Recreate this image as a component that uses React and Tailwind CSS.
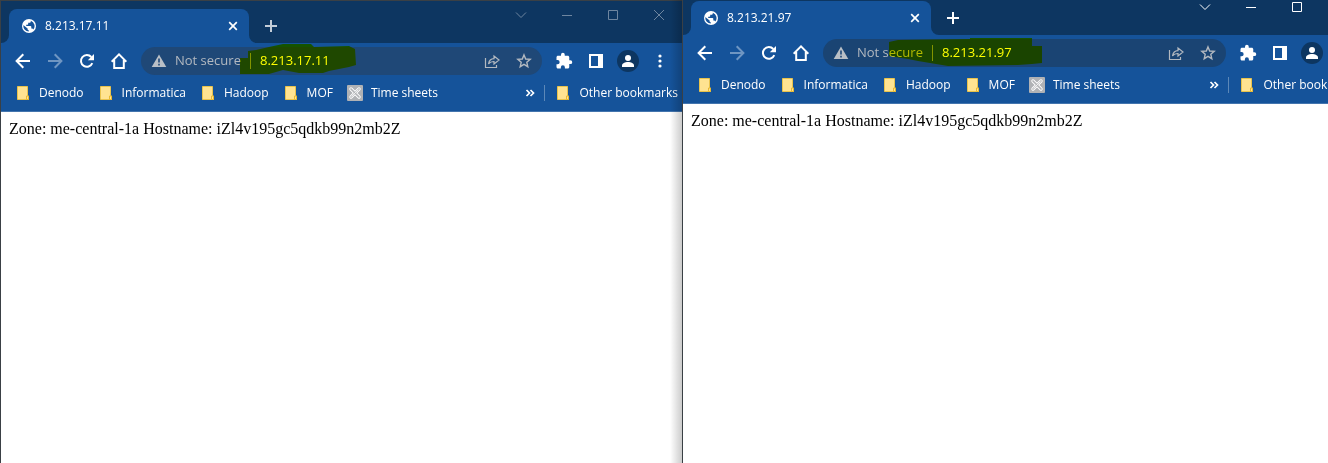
import React from "react";

const F = "font-['Open_Sans','Noto_Sans',sans-serif]";

function Globe() {
  return (
    <svg className="size-4 shrink-0" viewBox="0 0 16 16" aria-hidden="true">
      <circle cx="8" cy="8" r="7" fill="#fff" />
      <path
        d="M2.6 7.2 6.6 10.4v1l1.2 1v1.2A5.7 5.7 0 0 1 2.3 7.6zM9.8 2.7v.7c0 .8-.7 1.4-1.4 1.4H7.2v1.1c0 .5-.3.8-.7.8H5.2V8h4.3c.4 0 .8.4.8.8v1.8h.7c.6 0 1.1.4 1.3 1A5.7 5.7 0 0 0 9.8 2.7z"
        fill="#15539a"
      />
    </svg>
  );
}

function Folder() {
  return (
    <svg className="size-4 shrink-0" viewBox="0 0 16 16" aria-hidden="true">
      <path d="M2.5 1.5h10v9.5h1v3.5h-11z" fill="#ffe391" stroke="#e9c34c" />
      <path d="M11.5 14.5v-3.5h2v3.5z" fill="#ffe391" stroke="#e9b931" />
    </svg>
  );
}

function TimeSheet() {
  return (
    <svg className="size-4 shrink-0" viewBox="0 0 16 16" aria-hidden="true">
      <rect width="16" height="16" rx="1" fill="#b0b2b5" />
      <path d="M4 4l8 8M12 4l-8 8" stroke="#fff" strokeWidth="3.4" strokeLinecap="round" />
      <path d="M4 4l8 8M12 4l-8 8" stroke="#b0b2b5" strokeWidth="1.7" strokeLinecap="round" />
      <path d="M4.5 11.5l7-7" stroke="#fff" strokeWidth="0.8" />
    </svg>
  );
}

function IconButton({ label, children }) {
  return (
    <button type="button" aria-label={label} className="flex size-8 shrink-0 items-center justify-center text-white">
      {children}
    </button>
  );
}

function Stroke({ d, w = 2, className = "size-4" }) {
  return (
    <svg className={className} viewBox="0 0 16 16" fill="none" stroke="currentColor" strokeWidth={w} aria-hidden="true">
      <path d={d} />
    </svg>
  );
}

const links = [
  { name: "Denodo" },
  { name: "Informatica" },
  { name: "Hadoop" },
  { name: "MOF" },
  { name: "Time sheets", icon: <TimeSheet /> },
];

function Bookmark({ name, icon }) {
  return (
    <a href="#" className="flex shrink-0 items-center gap-2 whitespace-nowrap">
      {icon || <Folder />}
      <span>{name}</span>
    </a>
  );
}

function BrowserWindow({ address, active, marker }) {
  return (
    <section
      className={`${F} flex w-full ${active ? "min-w-[684px]" : "min-w-[682px]"} flex-1 flex-col border-t border-l border-[#3a4045] bg-white text-white`}
      aria-label={address}
    >
      <header className="flex h-[42px] shrink-0 bg-[#0d3661]">
        <div className="flex items-end">
          <div className="h-[34px] w-2 bg-[#15539a]">
            <div className="h-full rounded-br-lg bg-[#0d3661]" />
          </div>
          <div className="flex h-[34px] w-60 items-center gap-2 rounded-t-lg bg-[#15539a] pr-2 pl-3 text-xs">
            <Globe />
            <span className="flex-1">{address}</span>
            <button type="button" aria-label="Close tab" className="flex size-4 items-center justify-center">
              <Stroke d="M4.2 4.2l7.6 7.6M11.8 4.2l-7.6 7.6" w={1.7} />
            </button>
          </div>
          <div className="h-[34px] w-2 bg-[#15539a]">
            <div className="h-full rounded-bl-lg bg-[#0d3661]" />
          </div>
          <button
            type="button"
            aria-label="New tab"
            className={`ml-1 flex h-[34px] w-5 items-center justify-center ${active ? "text-white" : "text-[#c3cdd8]"}`}
          >
            <Stroke d="M8 2v12M2 8h12" w={2} />
          </button>
        </div>
        <div className={`ml-auto flex h-7 ${active ? "text-white" : "text-[#6e86a0]"}`}>
          <button type="button" aria-label="Search tabs" className="flex w-[46px] items-center justify-center">
            <Stroke d="M3 5.5l5 5 5-5" w={1} />
          </button>
          <button type="button" aria-label="Minimize" className="flex w-[46px] items-center justify-center">
            <Stroke d="M3 8.5h10" w={1} />
          </button>
          <button type="button" aria-label="Maximize" className="flex w-[46px] items-center justify-center">
            <Stroke d="M3.5 3.5h9v9h-9z" w={1} />
          </button>
          <button type="button" aria-label="Close" className="flex w-[46px] items-center justify-center">
            <Stroke d="M3 3l10 10M13 3L3 13" w={1} />
          </button>
        </div>
      </header>

      <div className="shrink-0 border-b border-[#4375ae] bg-[#15539a]">
        <div className="flex h-9 items-center px-[6px]">
          <IconButton label="Back">
            <Stroke d="M15 8H2M8.3 1.3L1.6 8l6.7 6.7" />
          </IconButton>
          <IconButton label="Forward">
            <span className="text-[#6f96c2]">
              <Stroke d="M1 8h13M7.7 1.3L14.4 8l-6.7 6.7" />
            </span>
          </IconButton>
          <IconButton label="Reload">
            <svg className="size-4" viewBox="0 0 16 16" aria-hidden="true">
              <path d="M13.3 10.2A5.9 5.9 0 1 1 12.3 4" fill="none" stroke="currentColor" strokeWidth="2" />
              <path d="M15 1v6.2H8.8z" fill="currentColor" />
            </svg>
          </IconButton>
          <IconButton label="Home">
            <Stroke d="M.6 8.7L8 1.4l7.4 7.3M3.2 7v8h9.6V7" />
          </IconButton>
          <div
            className={`relative ml-[6px] flex h-7 flex-1 items-center rounded-full px-[10px] text-[#b3b9c0] ${active ? "bg-[#1a4473]" : "bg-[#1f4877]"}`}
          >
            <svg className="size-4 shrink-0" viewBox="0 0 16 16" aria-hidden="true">
              <path d="M8 1.5L15.3 14H.7z" fill="#b9bfc6" />
              <path d="M8 5.5v4M8 10.8v1.6" stroke="#1f4877" strokeWidth="1.6" />
            </svg>
            <span className="ml-2 w-[75px] shrink-0 text-[13px] whitespace-nowrap">Not secure</span>
            <span className="h-4 w-px bg-[#8394a8]" />
            <input
              aria-label="Address"
              defaultValue={address}
              className="ml-[9px] min-w-0 flex-1 bg-transparent text-[13px] text-white outline-none"
            />
            <button type="button" aria-label="Share" className="mr-4 size-4">
              <Stroke
                d="M1.500 5v9.500h11V12M4.500 11c.6-3.600 2.600-5.200 5.500-5.300V3l5 4-5 4V8.500c-2.500-.1-4 .6-5.500 2.500z"
                w={1.2}
              />
            </button>
            <button type="button" aria-label="Bookmark this page" className="size-4">
              <Stroke
                d="M8 1.9l1.700 4.100 4.500.4-3.400 2.900 1 4.400L8 11.400l-3.800 2.300 1-4.400L1.800 6.400l4.500-.4z"
                w={1.4}
              />
            </button>
            {marker}
          </div>
          <div className="ml-[6px] flex">
            <IconButton label="Extensions">
              <svg className="size-[18px]" viewBox="0 0 24 24" fill="currentColor" aria-hidden="true">
                <path d="M20.5 11H19V7c0-1.100-.9-2-2-2h-4V3.500a2.500 2.500 0 0 0-5 0V5H4c-1.100 0-2 .9-2 2v3.800h1.500a2.700 2.700 0 0 1 0 5.400H2V20c0 1.100.9 2 2 2h3.800v-1.500a2.700 2.700 0 0 1 5.400 0V22H17c1.100 0 2-.9 2-2v-4h1.500a2.500 2.500 0 0 0 0-5z" />
              </svg>
            </IconButton>
            <IconButton label="Side panel">
              <svg className="size-4" viewBox="0 0 16 16" aria-hidden="true">
                <path fillRule="evenodd" d="M1 1h14v14H1zM3 3v10h7V3z" fill="currentColor" />
              </svg>
            </IconButton>
            <IconButton label="Profile">
              <svg className="size-[22px]" viewBox="0 0 22 22" aria-hidden="true">
                <circle cx="11" cy="11" r="11" fill="#0d3661" />
                <circle cx="11" cy="8" r="3" fill="currentColor" />
                <path d="M5 17v-1.500C5 13.300 8 12 11 12s6 1.300 6 3.500V17z" fill="currentColor" />
              </svg>
            </IconButton>
            <IconButton label="Menu">
              <svg className="size-4" viewBox="0 0 16 16" fill="currentColor" aria-hidden="true">
                <circle cx="8" cy="3" r="1.6" />
                <circle cx="8" cy="8" r="1.6" />
                <circle cx="8" cy="13" r="1.6" />
              </svg>
            </IconButton>
          </div>
        </div>
        <nav className="flex h-8 items-center pr-1 pb-1 pl-[14px] text-xs" aria-label="Bookmarks">
          <div className="flex gap-[14px]">
            {links.map((l) => (
              <Bookmark key={l.name} {...l} />
            ))}
          </div>
          <button type="button" aria-label="More bookmarks" className="mr-[6px] ml-auto size-4">
            <Stroke d="M4.5 5l3 3-3 3M8.5 5l3 3-3 3" w={1.7} />
          </button>
          <span className="mr-[10px] h-4 w-px bg-[#5c88b8]" />
          <Bookmark name="Other bookmarks" />
        </nav>
      </div>

      <main className="flex-1 p-2 font-['Liberation_Serif',serif] text-base leading-[18px] text-black">
        Zone: me-central-1a Hostname: iZl4v195gc5qdkb99n2mb2Z
      </main>
    </section>
  );
}

function Marker({ d }) {
  return (
    <svg
      className="pointer-events-none absolute -top-1 left-16 h-9 w-40 mix-blend-multiply"
      viewBox="0 0 160 36"
      aria-hidden="true"
    >
      <path d={d} fill="#ff0" />
    </svg>
  );
}

export default function App() {
  return (
    <div className="grid min-h-screen grid-cols-[682fr_646fr] overflow-hidden bg-white">
      <div className="relative flex overflow-hidden">
        <BrowserWindow
          address="8.213.17.11"
          marker={
            <Marker d="M35 15H43V8L51 7 64 4 78 1H106L109 4 144 3 150 6 151 22 144 24 124 28 118 30H94L78 27 64 31H35z" />
          }
        />
        <div className="pointer-events-none absolute inset-y-0 right-0 w-3 bg-gradient-to-l from-black/20 to-transparent" />
      </div>
      <div className="flex overflow-hidden">
        <div className="-mt-2 flex flex-1">
          <BrowserWindow
            active
            address="8.213.21.97"
            marker={
              <Marker d="M2 7L11 5 83 4V3H145V11H155V28L145 29 131 30 61 31 31 26 21 24 2 21z" />
            }
          />
        </div>
      </div>
    </div>
  );
}
